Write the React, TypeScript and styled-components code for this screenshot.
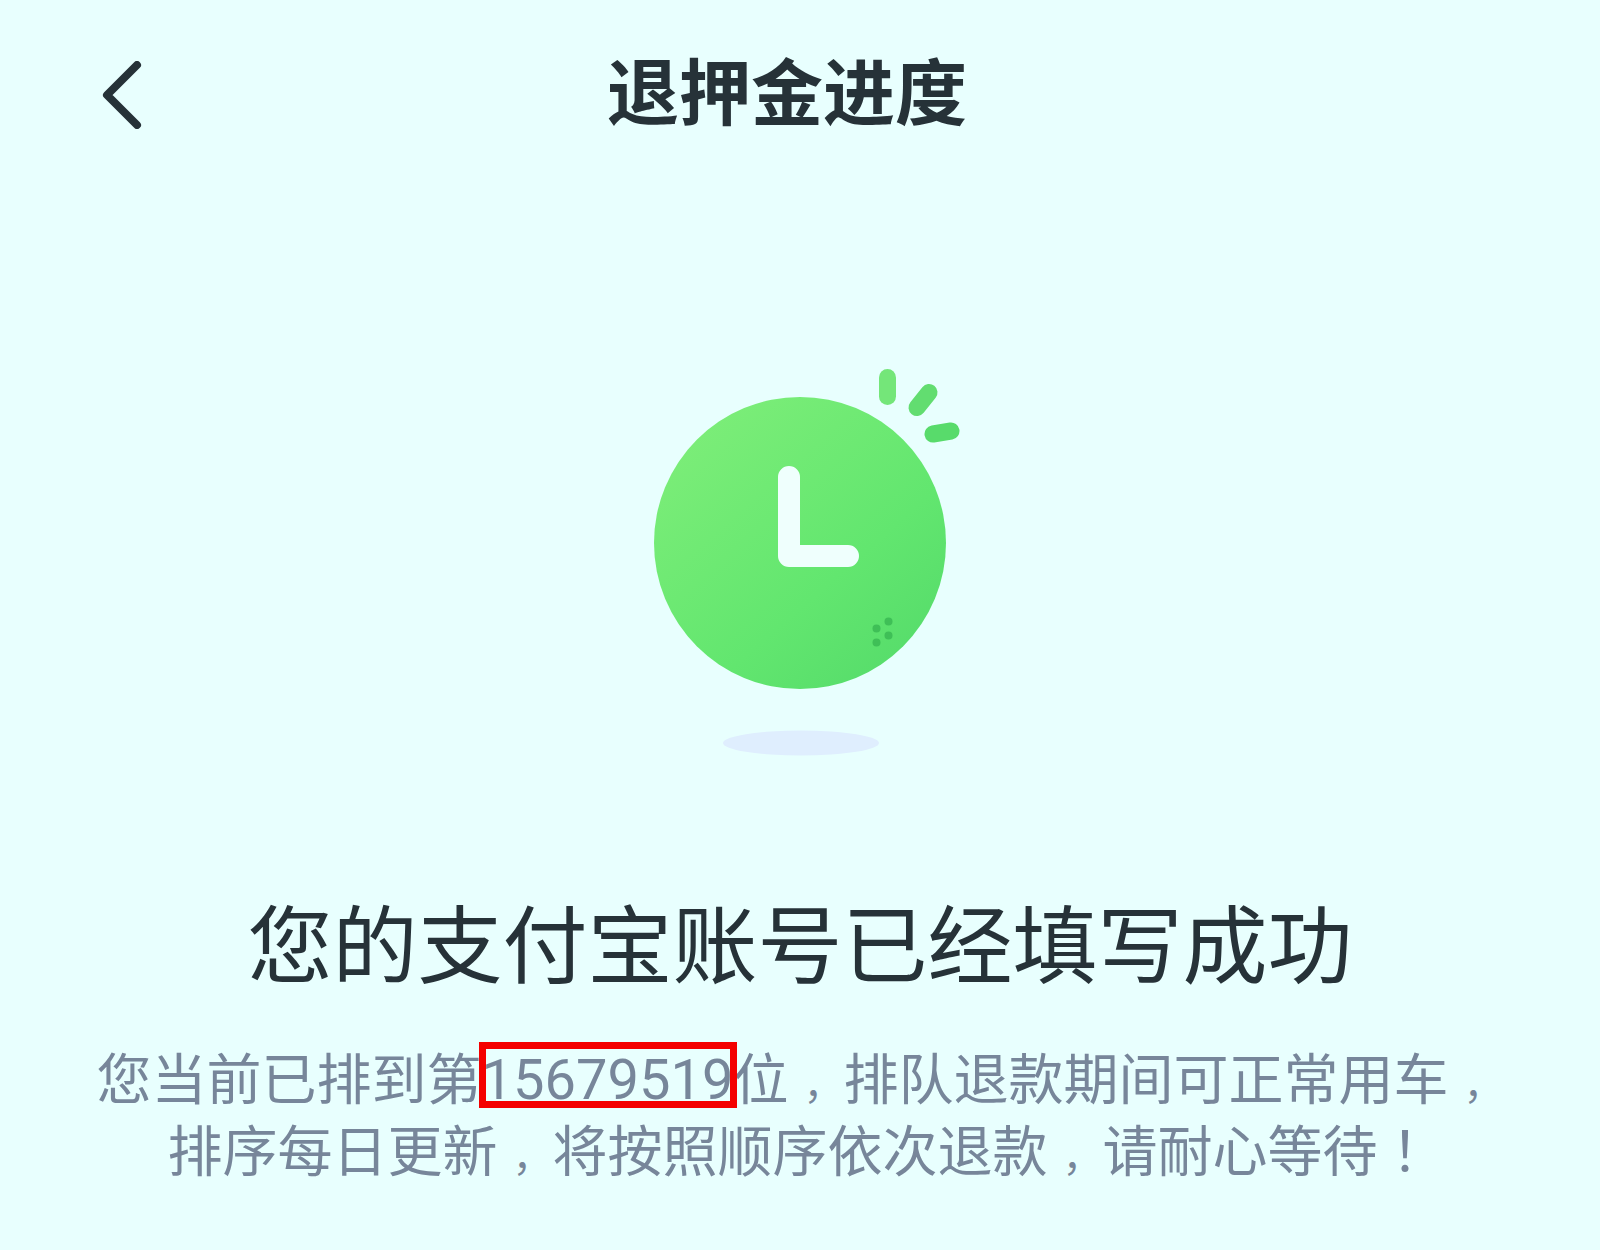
import React from "react";
import styled, { createGlobalStyle } from "styled-components";

const GlobalStyle = createGlobalStyle`
  *, *::before, *::after {
    box-sizing: border-box;
  }

  body {
    margin: 0;
    background: #e8fffe;
    color: #263238;
    font-family: Roboto, "Noto Sans CJK SC", sans-serif;
  }
`;

const Page = styled.div`
  display: flex;
  flex-direction: column;
  min-height: 100vh;
  padding-bottom: 48px;
`;

const Header = styled.header`
  display: flex;
  align-items: center;
  padding: 47px 99px 0;
`;

const BackButton = styled.button`
  display: flex;
  padding: 0;
  border: 0;
  background: none;
  color: inherit;
  cursor: pointer;
`;

const Title = styled.h1`
  flex: 1;
  margin: 0;
  padding-right: 70px;
  font-size: 72px;
  font-weight: 700;
  line-height: 96px;
  text-align: center;
`;

const Main = styled.main`
  display: flex;
  flex-direction: column;
  align-items: center;
  padding: 225px 80px 0;
`;

const Heading = styled.h2`
  margin: 128px 0 0;
  font-size: 85px;
  font-weight: 400;
  line-height: 128px;
  text-align: center;
`;

const Message = styled.p`
  margin: 32px 0 0;
  color: #77869a;
  font-size: 55px;
  line-height: 72px;
  text-align: center;
`;

const QueueNumber = styled.strong`
  position: relative;
  font-size: 56px;
  font-weight: 400;

  &::after {
    content: "";
    position: absolute;
    inset: -5px -4px 5px -3px;
    border: 7px solid #f40000;
  }
`;

const Comma = styled.span`
  padding-left: 15px;
  font-size: 40px;
  line-height: 1;
`;

const Exclamation = styled.span`
  font-family: Roboto, "Noto Sans CJK TC", sans-serif;
`;

function BackIcon() {
  return (
    <svg width="44" height="68" viewBox="0 0 44 68" aria-hidden="true">
      <path
        d="M38 4 8 34l30 30"
        fill="none"
        stroke="currentColor"
        strokeWidth="8"
        strokeLinecap="round"
        strokeLinejoin="round"
      />
    </svg>
  );
}

function ClockIllustration() {
  return (
    <svg width="320" height="388" viewBox="0 0 320 388" aria-hidden="true">
      <defs>
        <linearGradient id="face" x1="0.05" y1="0.2" x2="0.75" y2="1">
          <stop offset="0" stopColor="#7bed78" />
          <stop offset="0.65" stopColor="#62e66f" />
          <stop offset="1" stopColor="#57dd6b" />
        </linearGradient>
      </defs>
      <circle cx="160" cy="175" r="146" fill="url(#face)" />
      <path
        d="M149 109v79h59"
        fill="none"
        stroke="#effffd"
        strokeWidth="22"
        strokeLinecap="round"
        strokeLinejoin="round"
      />
      <g fill="none" strokeWidth="17" strokeLinecap="round">
        <path d="M247.500 9.500v19" stroke="#74e679" />
        <path d="M277 39.500l12-15" stroke="#62dd70" />
        <path d="M293 66l18-3" stroke="#58db6b" />
      </g>
      <g fill="#3fbf57">
        <circle cx="248.500" cy="253.500" r="4" />
        <circle cx="236.500" cy="260.500" r="4" />
        <circle cx="248.500" cy="267.500" r="4" />
        <circle cx="236.500" cy="274.500" r="4" />
      </g>
      <ellipse cx="161" cy="375" rx="78" ry="12.500" fill="#dfeefe" />
    </svg>
  );
}

export default function App() {
  return (
    <>
      <GlobalStyle />
      <Page lang="zh-CN">
        <Header>
          <BackButton type="button" aria-label="返回">
            <BackIcon />
          </BackButton>
          <Title>退押金进度</Title>
        </Header>
        <Main>
          <ClockIllustration />
          <Heading>您的支付宝账号已经填写成功</Heading>
          <Message>
            您当前已排到第<QueueNumber>15679519</QueueNumber>位<Comma>，</Comma>
            排队退款期间可正常用车<Comma>，</Comma>
            排序每日更新<Comma>，</Comma>将按照顺序依次退款<Comma>，</Comma>
            请耐心等待<Exclamation lang="zh-TW">！</Exclamation>
          </Message>
        </Main>
      </Page>
    </>
  );
}
